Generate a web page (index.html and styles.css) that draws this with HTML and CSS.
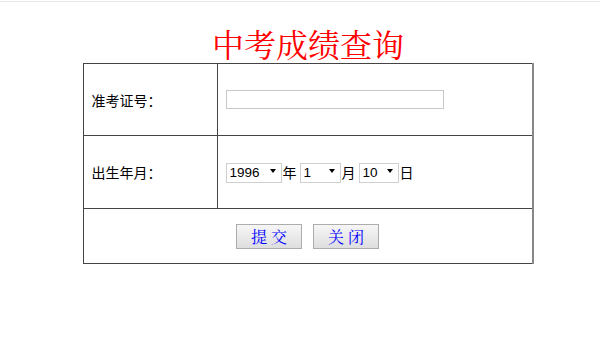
FILE: index.html
```html
<!DOCTYPE html>
<html lang="zh-CN">
<head>
<meta charset="utf-8">
<title>中考成绩查询</title>
<link rel="stylesheet" href="styles.css">
</head>
<body>
<div class="page">
  <h1 class="title">中考成绩查询</h1>
  <form class="form">
    <table class="grid">
      <tr class="row row-first">
        <td class="label">准考证号：</td>
        <td class="field"><input class="text" type="text"></td>
      </tr>
      <tr class="row">
        <td class="label">出生年月：</td>
        <td class="field">
          <div class="date">
            <span class="sel sel-year"><select><option>1996</option></select><i class="arrow"></i></span><span class="unit">年</span>
            <span class="sel sel-small"><select><option>1</option></select><i class="arrow"></i></span><span class="unit">月</span>
            <span class="sel sel-small sel-day"><select><option>10</option></select><i class="arrow"></i></span><span class="unit">日</span>
          </div>
        </td>
      </tr>
      <tr class="row-actions">
        <td class="actions" colspan="2">
          <div class="buttons">
            <button type="button" class="btn">提 交</button>
            <button type="button" class="btn">关 闭</button>
          </div>
        </td>
      </tr>
    </table>
  </form>
</div>
</body>
</html>
```

FILE: styles.css
```css
html, body {
  margin: 0;
  padding: 0;
  background: #fff;
}
body {
  padding-top: 1px;
  font-family: "Noto Sans CJK SC", "Liberation Sans", sans-serif;
  color: #000;
}
.page {
  border-top: 1px solid #e6e6e6;
  padding-left: 16px;
  display: flex;
  flex-direction: column;
  align-items: center;
}
.title {
  margin: 21px 0 0;
  height: 40px;
  line-height: 40px;
  font-size: 32px;
  font-weight: 400;
  color: #ff0000;
  font-family: "Noto Serif CJK SC", "Noto Sans CJK SC", serif;
}
.form {
  margin: 0;
}
.grid {
  width: 451px;
  border-collapse: collapse;
  border: 1px solid #444;
  border-right: 2px solid #888;
}
.grid td {
  border: 1px solid #444;
  padding: 0;
}
.row td {
  height: 72px;
}
.row-first td {
  height: 71px;
}
.label {
  width: 125px;
  padding-left: 8px !important;
  font-size: 14px;
  vertical-align: middle;
}
.field {
  padding-left: 8px !important;
  vertical-align: middle;
}
.text {
  display: block;
  box-sizing: border-box;
  width: 218px;
  height: 19px;
  margin: 0;
  border: 1px solid #c8c8c8;
  padding: 0 2px;
  background: #fff;
  font-size: 13px;
}
.date {
  display: flex;
  align-items: center;
  font-size: 14px;
}
.sel {
  position: relative;
  display: inline-block;
  margin-right: 1px;
}
.sel select {
  appearance: none;
  -webkit-appearance: none;
  box-sizing: border-box;
  height: 20px;
  margin: 0;
  border: 1px solid #cfcfcf;
  border-radius: 0;
  background: #fff;
  padding: 0 0 0 3px;
  font-family: "Liberation Sans", sans-serif;
  font-size: 13.5px;
  color: #000;
}
.sel-year select { width: 56px; }
.sel-small select { width: 41px; }
.sel-day select { width: 40px; }
.arrow {
  position: absolute;
  right: 6px;
  top: 8px;
  width: 0;
  height: 0;
  border-left: 3px solid transparent;
  border-right: 3px solid transparent;
  border-top: 4px solid #000;
  pointer-events: none;
}
.unit {
  margin-right: 3px;
}
.row-actions td {
  height: 54px;
}
.actions {
  vertical-align: middle;
}
.buttons {
  display: flex;
  justify-content: center;
  gap: 11px;
}
.btn {
  box-sizing: border-box;
  width: 66px;
  height: 25px;
  margin: 0;
  padding: 0;
  border: 1px solid #acacac;
  border-radius: 0;
  background: linear-gradient(#f6f6f6, #dedede);
  color: #0000ff;
  font-family: "Noto Serif CJK SC", "Noto Sans CJK SC", serif;
  font-size: 16px;
  line-height: 23px;
  white-space: pre;
}
```
